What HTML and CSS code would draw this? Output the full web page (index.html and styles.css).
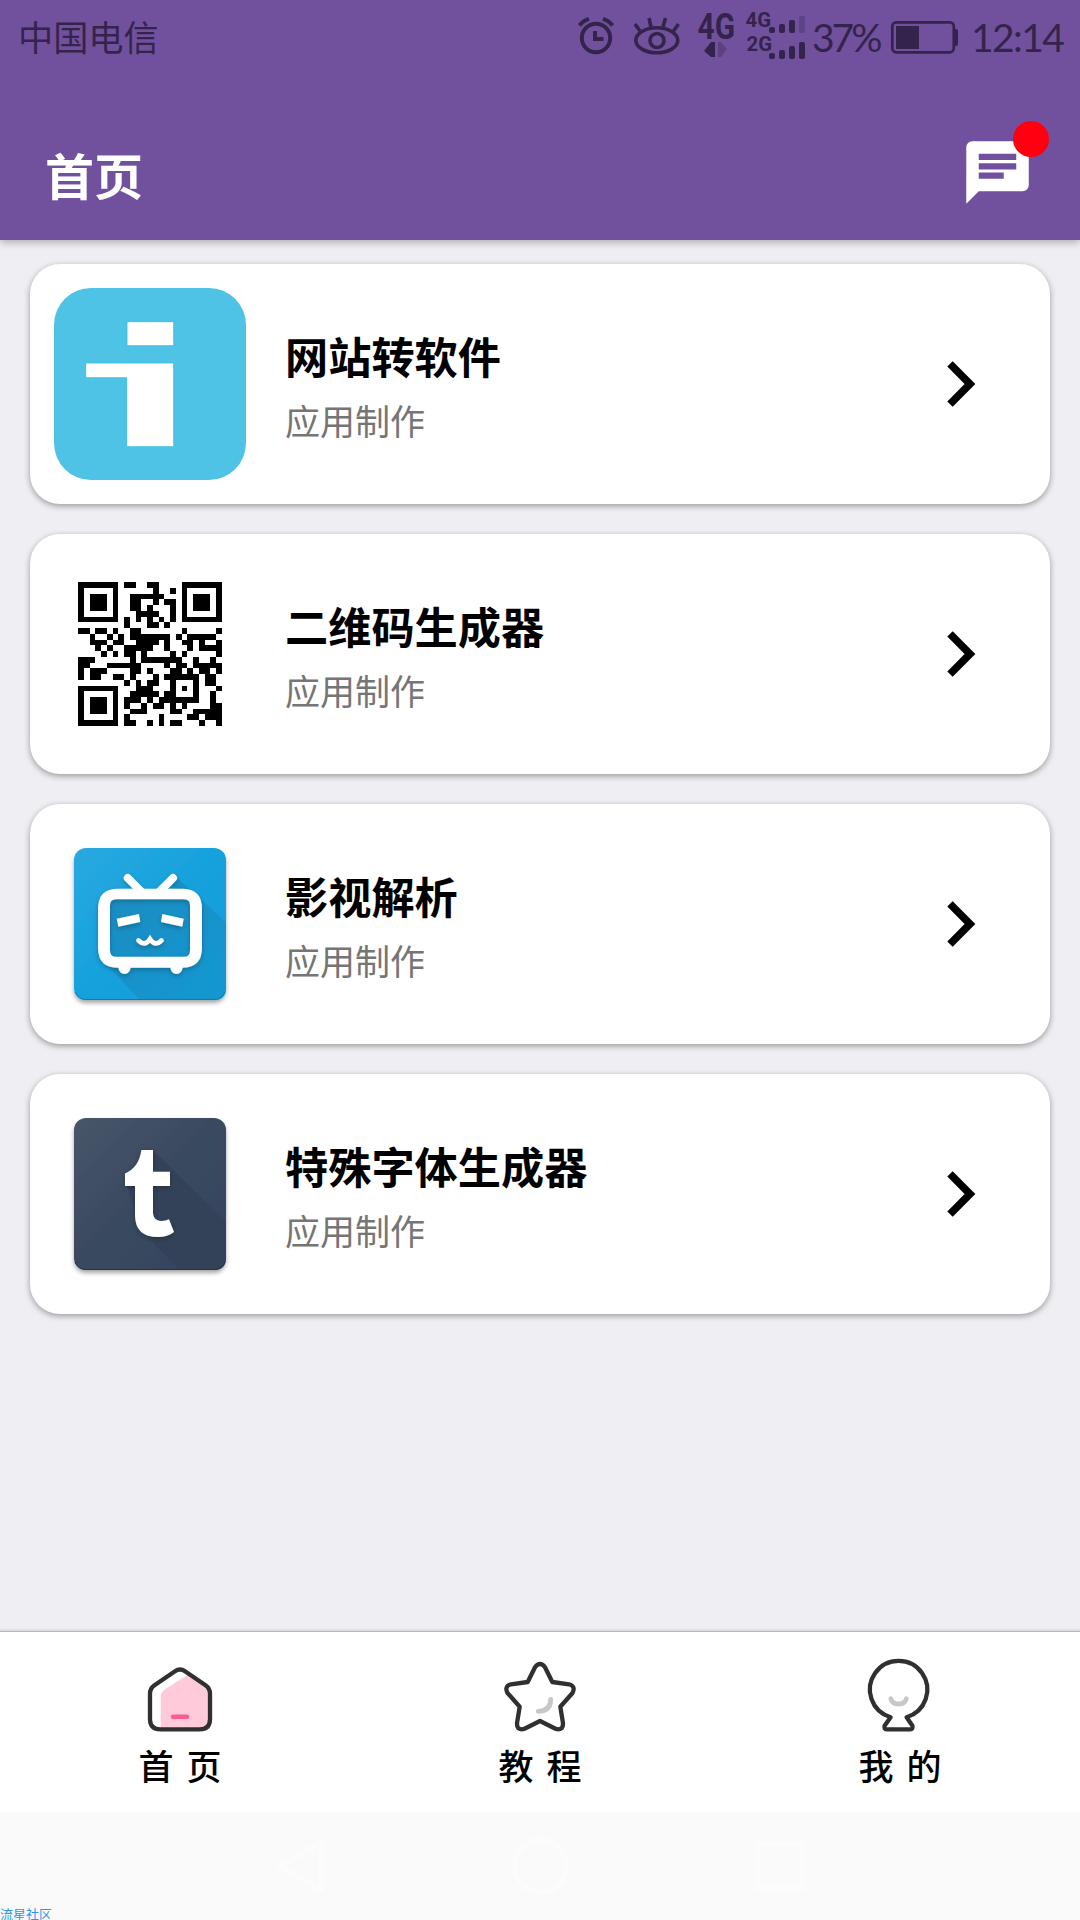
FILE: index.html
```html
<!DOCTYPE html>
<html lang="zh-CN">
<head>
<meta charset="utf-8">
<title>首页</title>
<link rel="stylesheet" href="styles.css">
</head>
<body>
<div class="screen">
  <header class="topbar">
    <div class="status">
      <span class="carrier">中国电信</span>
      <svg class="st-alarm" viewBox="577 0 38 80" width="38" height="80"><g fill="none" stroke="#34244b" stroke-width="4"><circle cx="596" cy="38" r="14.2"/><path d="M595 31v8h8.500M579.500 25.500Q583 20.500 589 18.800M612.500 25.500Q609 20.500 603 18.800"/></g></svg>
      <svg class="st-eye" viewBox="633 0 48 80" width="48" height="80"><g fill="none" stroke="#34244b" stroke-width="3.600"><ellipse cx="656.800" cy="40.300" rx="21" ry="12.500"/><circle cx="657" cy="40.500" r="7"/><path d="M640 31l-5-7M651 27l-2-9M663 27l2.500-9M673.500 31l5-7"/></g></svg>
      <svg class="st-4g" viewBox="697 0 40 80" width="40" height="80"><text x="697.500" y="38.500" font-size="36" textLength="37.500" lengthAdjust="spacingAndGlyphs">4G</text><path fill="#34244b" d="M704 51l7-9h4v15h-4z"/><path fill="#5b427f" d="M718 42h3l6 7-6 8h-3z"/></svg>
      <svg class="st-sig" viewBox="745 0 62 80" width="62" height="80"><text x="745.500" y="26.500" font-size="20" textLength="25.500" lengthAdjust="spacingAndGlyphs">4G</text><text x="746.500" y="51" font-size="20" textLength="25.500" lengthAdjust="spacingAndGlyphs">2G</text><g fill="#34244b"><rect x="769" y="27" width="6" height="6" rx="2"/><rect x="779" y="24" width="6" height="9" rx="2"/><rect x="789" y="20" width="6" height="13" rx="2"/><rect x="799" y="16" width="6" height="17" rx="2" fill="#5e4387"/><rect x="769" y="53" width="6" height="6" rx="2"/><rect x="779" y="50" width="6" height="9" rx="2"/><rect x="789" y="46" width="6" height="13" rx="2"/><rect x="799" y="42" width="6" height="17" rx="2"/></g></svg>
      <span class="pct">37%</span>
      <svg class="st-bat" viewBox="890 0 70 80" width="70" height="80"><rect x="892.300" y="22.300" width="61.500" height="30" rx="4" fill="none" stroke="#34244b" stroke-width="2.700"/><path fill="#34244b" d="M896 26h23v23h-23zM954 29h2q2 0 2 2v13q0 2-2 2h-2z"/></svg>
      <span class="clock">12:14</span>
    </div>
    <div class="titlebar">
      <h1>首页</h1>
      <div class="msg">
        <svg viewBox="0 0 24 24" width="75" height="75"><path fill="#fff" d="M20 2H4c-1.100 0-1.990.9-1.990 2L2 22l4-4h14c1.100 0 2-.9 2-2V4c0-1.100-.9-2-2-2zM6 9h12v2H6V9zm8 5H6v-2h8v2zm4-6H6V6h12v2z"/></svg>
        <i class="badge"></i>
      </div>
    </div>
  </header>

  <main class="list">
    <article class="card">
      <svg class="logo" viewBox="0 0 192 192"><rect width="192" height="192" rx="37" fill="#4fc3e5"/><path fill="#fff" stroke="#34b9e0" stroke-width=".8" d="M73 33.700h46.700v24H73zM31.700 75h88v83.700h-47v-69h-41z"/></svg>
      <div class="text"><h2>网站转软件</h2><p>应用制作</p></div>
      <svg class="chev" viewBox="0 0 72 72"><path d="M26 15.800l20 20.200-20 20.200"/></svg>
    </article>
    <article class="card">
      <svg class="logo" viewBox="0 0 192 192"><path id="qr" transform="translate(24 24) scale(5.760)" shape-rendering="crispEdges"/></svg>
      <div class="text"><h2>二维码生成器</h2><p>应用制作</p></div>
      <svg class="chev" viewBox="0 0 72 72"><path d="M26 15.800l20 20.200-20 20.200"/></svg>
    </article>
    <article class="card">
      <svg class="logo" viewBox="0 0 192 192">
        <defs>
          <linearGradient id="blue" x1="0" y1="0" x2="1" y2="1"><stop offset="0" stop-color="#2aa9e0"/><stop offset=".5" stop-color="#16a1dc"/><stop offset="1" stop-color="#129cd8"/></linearGradient>
          <linearGradient id="bshade" x1="0" y1="0" x2="1" y2="1"><stop offset="0" stop-color="#1b8cc0"/><stop offset="1" stop-color="#1398d2"/></linearGradient>
          <filter id="sh" x="-20%" y="-20%" width="140%" height="140%"><feDropShadow dx="0" dy="3" stdDeviation="2" flood-color="#000" flood-opacity=".35"/></filter>
          <filter id="sh2" x="-20%" y="-20%" width="140%" height="140%"><feDropShadow dx="0" dy="2" stdDeviation="2.500" flood-color="#000" flood-opacity=".25"/></filter>
        </defs>
        <rect x="20" y="20" width="152" height="152" rx="12" fill="url(#blue)" filter="url(#sh)"/>
        <path fill="url(#bshade)" d="M122 49l50 45v66q0 12-12 12H86L54 138V70h60z"/>
        <path d="M21 164q3 7.500 11 7.500h128q8 0 11-7.500" fill="none" stroke="#0e7dae"/>
        <g filter="url(#sh2)" fill="none" stroke="#fff">
          <path fill="#fff" fill-rule="evenodd" stroke="none" d="M64 60.700h64q20 0 20 20v39q0 20-20 20H64q-20 0-20-20v-39q0-20 20-20zM62 71.300q-6 0-6 6v45.400q0 6 6 6h68q6 0 6-6V77.300q0-6-6-6z"/>
          <path stroke-width="8" stroke-linecap="round" d="M73.700 50l14 14M119 50l-14 14"/>
          <path fill="#fff" stroke="none" d="M64 138h13q-1 8-6.500 8T64 138zM116 138h13q-1 8-6.500 8t-6.500-8zM62.700 90.700L85 86l1.300 8-22 4.700zM108.300 86l21.400 4.700-1.400 8L107 94z"/>
          <path stroke-width="4.600" stroke-linecap="round" d="M84.500 112.500q6.500 6.500 11.500-1.500 5 8 11.500 1.500"/>
        </g>
      </svg>
      <div class="text"><h2>影视解析</h2><p>应用制作</p></div>
      <svg class="chev" viewBox="0 0 72 72"><path d="M26 15.800l20 20.200-20 20.200"/></svg>
    </article>
    <article class="card">
      <svg class="logo" viewBox="0 0 192 192">
        <defs><linearGradient id="navy" x1="0" y1="0" x2="1" y2="1"><stop offset="0" stop-color="#48566b"/><stop offset=".5" stop-color="#394960"/><stop offset="1" stop-color="#34455e"/></linearGradient></defs>
        <rect x="20" y="20" width="152" height="152" rx="12" fill="url(#navy)" filter="url(#sh)"/>
        <path fill="#334258" d="M99 52l73 72v36q0 12-12 12h-34L88 134 73 88z"/>
        <path d="M21 164q3 7.500 11 7.500h128q8 0 11-7.500" fill="none" stroke="#243148"/>
        <path filter="url(#sh2)" fill="#fff" d="M87.400 52H99v21.700h17V88H99v27.500Q100 123 107.500 123q4 0 7.500-1.800l5 12.800q-6 5-16 5-23 0-23-22V88H71V75.500q14-6 16.400-23.500z"/>
      </svg>
      <div class="text"><h2>特殊字体生成器</h2><p>应用制作</p></div>
      <svg class="chev" viewBox="0 0 72 72"><path d="M26 15.800l20 20.200-20 20.200"/></svg>
    </article>
  </main>

  <nav class="tabs">
    <a class="tab">
      <svg viewBox="0 0 72 72"><path fill="#ffcbdb" d="M16.700 68V37q0-4.500 4-7.500L43.300 15 66 29v40z"/><path class="line" d="M31 11.300q5-3.600 10 0l20.500 13.900q4.500 3.200 4.500 8.300V59q0 10.300-10.300 10.300H16.300Q6 69.300 6 59V33.500q0-5.100 4.500-8.300z"/><path d="M29 56.700h14" fill="none" stroke="#ff5b8d" stroke-width="4.600" stroke-linecap="round"/></svg>
      <span>首 页</span>
    </a>
    <a class="tab">
      <svg viewBox="0 0 72 72"><path class="line" d="M23.700 22L31 7.300q5-6.600 10 0L48.300 22l16.700 2.300q7 2 3.500 8.700L56.300 46.700l2.700 16.500q0 8-7.500 5.500L36 61l-15.500 7.700q-7.500 2.500-7.500-5.500l2.700-16.500L3.500 33q-3.500-6.700 3.500-8.700z"/><path class="grin" d="M46.700 39.300q0 12-12.500 12"/></svg>
      <span>教 程</span>
    </a>
    <a class="tab">
      <svg viewBox="0 0 72 72"><path class="line" d="M26.600 57.200a28.700 28.700 0 1 1 16 0l5.800 8.500q1 3.600-2.200 3.600H22.800q-3.200 0-2.200-3.600z"/><path class="grin" d="M26.900 38.800q1.500 5.200 7.700 5.200t7.700-5.200"/></svg>
      <span>我 的</span>
    </a>
  </nav>
  <footer class="sysnav">
    <svg viewBox="0 0 1080 108" width="1080" height="108"><g fill="none" stroke="#fcfcfc" stroke-width="5" stroke-linejoin="round"><path d="M280 54l41-24v48z"/><circle cx="540.500" cy="54" r="26"/><rect x="758" y="32" width="44" height="44"/></g></svg>
    <span class="mark">流星社区</span>
  </footer>
</div>
<script src="qr.js"></script>
</body>
</html>
```
FILE: qr.js
```js
// QR code, version 2 (25 x 25), error correction level L, mask 6.
(function () {
  var N = 25, DATA = 34, ECC = 10;
  var text = "https://www.lanzous.com/b900300";

  // Data codewords: byte mode, length, bytes, terminator, padding.
  var bits = "0100" + bin(text.length, 8);
  for (var i = 0; i < text.length; i++) bits += bin(text.charCodeAt(i), 8);
  bits += "0000".slice(0, DATA * 8 - bits.length);
  while (bits.length % 8) bits += "0";
  var words = bits.match(/.{8}/g).map(function (b) { return parseInt(b, 2); });
  for (var pad = 0xec; words.length < DATA; pad ^= 0xec ^ 0x11) words.push(pad);

  // Reed-Solomon remainder.
  function mul(a, b) {
    var r = 0;
    for (var k = 7; k >= 0; k--) {
      r = (r << 1) ^ ((r >> 7) * 0x11d);
      if ((b >> k) & 1) r ^= a;
    }
    return r;
  }
  var gen = new Array(ECC).fill(0), root = 1;
  gen[ECC - 1] = 1;
  for (i = 0; i < ECC; i++) {
    for (var j = 0; j < ECC; j++) {
      gen[j] = mul(gen[j], root);
      if (j + 1 < ECC) gen[j] ^= gen[j + 1];
    }
    root = mul(root, 2);
  }
  var rem = new Array(ECC).fill(0);
  words.forEach(function (w) {
    var f = w ^ rem.shift();
    rem.push(0);
    gen.forEach(function (g, k) { rem[k] ^= mul(g, f); });
  });
  var stream = words.concat(rem).map(function (w) { return bin(w, 8); }).join("");

  // Function patterns.
  var m = [];
  for (i = 0; i < N; i++) m.push(new Array(N).fill(null));
  function finder(cx, cy) {
    for (var dy = -4; dy <= 4; dy++) for (var dx = -4; dx <= 4; dx++) {
      var x = cx + dx, y = cy + dy, d = Math.max(Math.abs(dx), Math.abs(dy));
      if (x >= 0 && y >= 0 && x < N && y < N) m[y][x] = d !== 2 && d !== 4;
    }
  }
  for (i = 0; i < N; i++) m[6][i] = m[i][6] = i % 2 === 0;
  finder(3, 3); finder(N - 4, 3); finder(3, N - 4);
  for (var v = -2; v <= 2; v++) for (var u = -2; u <= 2; u++)
    m[18 + v][18 + u] = Math.max(Math.abs(u), Math.abs(v)) !== 1;
  var fmt = "110110001000001".split("").reverse().map(Number);
  for (i = 0; i < 6; i++) m[i][8] = !!fmt[i];
  m[7][8] = !!fmt[6]; m[8][8] = !!fmt[7]; m[8][7] = !!fmt[8];
  for (i = 9; i < 15; i++) m[8][14 - i] = !!fmt[i];
  for (i = 0; i < 8; i++) m[8][N - 1 - i] = !!fmt[i];
  for (i = 8; i < 15; i++) m[N - 15 + i][8] = !!fmt[i];
  m[N - 8][8] = true;

  // Zigzag placement with the mask applied.
  var p = 0;
  for (var right = N - 1; right >= 1; right -= 2) {
    if (right === 6) right = 5;
    for (var t = 0; t < N; t++) for (j = 0; j < 2; j++) {
      var x = right - j, up = ((right + 1) & 2) === 0, y = up ? N - 1 - t : t;
      if (m[y][x] === null) {
        var mask = ((x * y) % 2 + (x * y) % 3) % 2 === 0;
        m[y][x] = (stream[p++] === "1") !== mask;
      }
    }
  }

  var d = "";
  m.forEach(function (row, y) {
    row.forEach(function (on, x) { if (on) d += "M" + x + " " + y + "h1v1h-1z"; });
  });
  document.getElementById("qr").setAttribute("d", d);

  function bin(n, len) { return n.toString(2).padStart(len, "0"); }
})();
```
FILE: styles.css
```css
* { box-sizing: border-box; margin: 0; padding: 0; }
body { font-family: "Noto Sans CJK SC", sans-serif; background: #efeef3; }
svg { display: block; flex: none; overflow: visible; }
.screen { width: 1080px; height: 1920px; display: flex; flex-direction: column; background: #efeef3; overflow: hidden; }
.topbar { height: 240px; flex: none; background: #71519d; box-shadow: 0 2px 8px rgba(0,0,0,.3); }
.status { height: 80px; display: flex; align-items: flex-start; color: #34244b; padding-left: 18px; }
.status text { font-family: Roboto, sans-serif; font-weight: 700; fill: #34244b; }
.carrier { font-size: 35.2px; line-height: 71px; width: 559px; }
.st-eye { margin-left: 18px; }
.st-4g { margin-left: 16px; }
.st-sig { margin-left: 8px; }
.pct, .clock { font-family: Lato, sans-serif; font-weight: 400; font-size: 39px; line-height: 74px; white-space: nowrap; }
.pct { width: 78px; margin-left: 5px; letter-spacing: -3px; }
.clock { margin-left: 11px; letter-spacing: -1.6px; }
.titlebar { height: 160px; display: flex; justify-content: space-between; padding: 55px 45px 0 45px; }
h1 { color: #fff; font-size: 49px; line-height: 78px; font-weight: 700; }
.msg { position: relative; width: 75px; height: 75px; }
.badge { position: absolute; left: 53px; top: -14px; width: 36px; height: 36px; border-radius: 50%; background: #ff0010; }
.list { flex: 1; padding: 24px 30px 0; display: flex; flex-direction: column; gap: 30px; }
.card { height: 240px; display: flex; align-items: center; padding: 0 54px 0 24px; background: #fff; border-radius: 30px; box-shadow: 0 2px 6px rgba(0,0,0,.36); }
.logo { width: 192px; height: 192px; }
.text { flex: 1; margin-left: 39px; padding-top: 4px; }
h2 { font-size: 43.2px; line-height: 58px; font-weight: 700; color: #000; }
.text p { margin-top: 10px; font-size: 35px; line-height: 52px; color: #757575; }
.chev { width: 72px; height: 72px; fill: none; stroke: #000; stroke-width: 7.6; }
.tabs { height: 181px; flex: none; display: flex; background: #fff; border-top: 1px solid #b9b9bd; box-shadow: 0 -1px 2px rgba(0,0,0,.12); }
.tab { flex: 1; display: flex; flex-direction: column; align-items: center; padding-top: 28px; color: #000; }
.tab svg { width: 72px; height: 72px; }
.tab span { font-size: 35px; line-height: 50px; margin-top: 8px; word-spacing: 5px; font-weight: 500; }
.line { fill: none; stroke: #303030; stroke-width: 4.3; stroke-linejoin: round; }
.grin { fill: none; stroke: #c8c8c8; stroke-width: 4.8; stroke-linecap: round; }
.sysnav { position: relative; height: 108px; flex: none; background: #fafafa; }
.mark { position: absolute; left: 0; bottom: 0; font-size: 13px; line-height: 13px; color: #2f95ee; }
```
